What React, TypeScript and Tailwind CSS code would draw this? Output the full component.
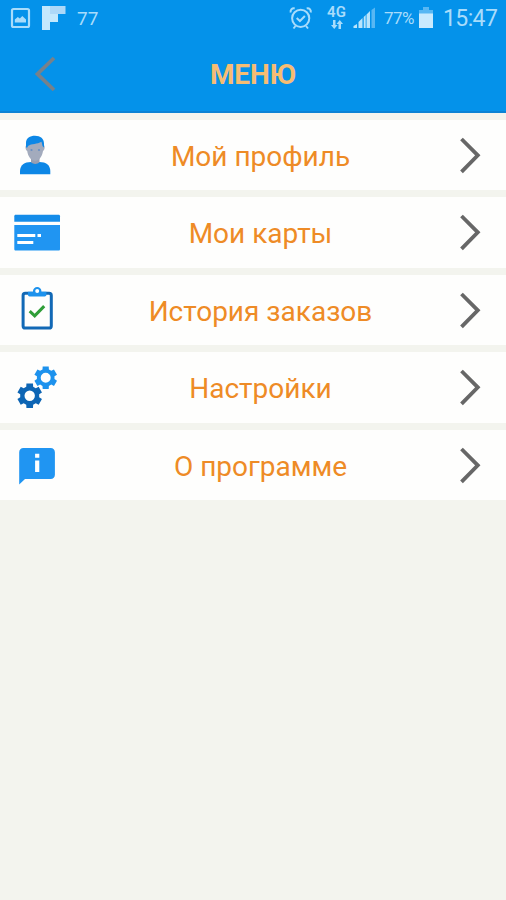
import type { ReactNode } from 'react';

/** Outline of a six-toothed gear wheel with a round hole. */
function gearPath(cx: number, cy: number, r: number, body: number, hole: number): string {
  const pts: string[] = [];
  for (let i = 0; i < 6; i++) {
    const mid = (i * 60 - 90) * (Math.PI / 180);
    const add = (radius: number, deg: number) => {
      const a = mid + (deg * Math.PI) / 180;
      pts.push(`${(cx + radius * Math.cos(a)).toFixed(2)} ${(cy + radius * Math.sin(a)).toFixed(2)}`);
    };
    add(body, -21);
    add(r, -15);
    add(r, 15);
    add(body, 21);
  }
  return `M${pts.join('L')}Z M${cx - hole} ${cy}a${hole} ${hole} 0 1 0 ${hole * 2} 0a${hole} ${hole} 0 1 0 ${-hole * 2} 0Z`;
}

function RowIcon({ children }: { children: ReactNode }) {
  return (
    <svg className="h-[70.5px] w-20 shrink-0" viewBox="0 0 80 70.5" fill="none">
      {children}
    </svg>
  );
}

const profileIcon = (
  <RowIcon>
    <path d="M20 54.3v-3.2c0-6.2 4.5-9.2 11-9.2h8.5c6.500 0 10.800 3 10.800 9.200v3.200Z" fill="#0d87e6" />
    <path d="M31 38h8.500v4.200c-2.500 2.300-6 2.300-8.500 0Z" fill="#989eb1" />
    <path d="M26.700 25c-1.800.2-1.500 5 .5 6 .8 5.600 4 9.800 7.900 9.800s7.100-4.200 7.900-9.800c2-1 2.300-5.800.5-6l-2-5H28.500Z" fill="#a3abbd" />
    <path d="M26 27.500v-4.500c0-5 4-7.200 9-7.200 5.500 0 9 3 9 7.700v4l-1.500-1.500-1-4.200c-4.400 2.700-9.800 1.600-13.500 4.300l-.6 1.500Z" fill="#0d87e6" />
    <circle cx="31.500" cy="30" r="1.100" fill="#6a8fc0" />
    <circle cx="39" cy="30" r="1.100" fill="#6a8fc0" />
  </RowIcon>
);

const cardsIcon = (
  <RowIcon>
    <path d="M14.300 19.200c0-1 .5-1.500 1.500-1.500h42.700c1 0 1.500.5 1.500 1.500v5.500H14.300Z" fill="#148ce9" />
    <path d="M14.300 28H60v24c0 1-.5 1.500-1.500 1.500H15.800c-1 0-1.500-.5-1.500-1.500Z" fill="#2095f2" />
    <path d="M17.300 38.500h18M37.500 38.500h3.500M17.300 45.500h16" stroke="#fff" strokeWidth="3.200" />
  </RowIcon>
);

const historyIcon = (
  <RowIcon>
    <rect x="23.100" y="18.300" width="28.200" height="34.800" rx="2.200" stroke="#1269b6" strokeWidth="3" />
    <path d="M28 16.800h5v-.7a4.200 4.200 0 0 1 8.400 0v.7h5v3c0 1-.7 1.700-1.700 1.700h-15c-1 0-1.700-.7-1.700-1.700Z" fill="#1d92ed" />
    <circle cx="37.200" cy="15.900" r="2" fill="#fff" />
    <path d="m29.700 36.200 5 4.700 9.500-9.800" stroke="#2f9e38" strokeWidth="3" />
  </RowIcon>
);

const settingsIcon = (
  <RowIcon>
    <path d={gearPath(45.700, 25.700, 11.700, 8.900, 5)} fill="#1d92ed" fillRule="evenodd" />
    <path d={gearPath(29.700, 43.700, 12.700, 9.600, 5.200)} fill="#0d65b4" fillRule="evenodd" />
  </RowIcon>
);

const aboutIcon = (
  <RowIcon>
    <path d="M19.200 54.500V22.200c0-2.500 1.700-4.200 4.200-4.200h27.300c2.500 0 4.200 1.700 4.200 4.200v22.600c0 2.500-1.700 4.200-4.200 4.200H25Z" fill="#2095f2" />
    <path d="M37.200 23.700v4.100M37.200 30.400v11.700" stroke="#fff" strokeWidth="4.200" />
  </RowIcon>
);

const items = [
  { label: 'Мой профиль', icon: profileIcon },
  { label: 'Мои карты', icon: cardsIcon },
  { label: 'История заказов', icon: historyIcon },
  { label: 'Настройки', icon: settingsIcon },
  { label: 'О программе', icon: aboutIcon },
];

function StatusBar() {
  return (
    <div className="flex h-[37px] items-center text-[#a8dcfb]">
      <svg className="h-[37px] w-[72px] shrink-0" viewBox="0 0 72 37" fill="none">
        <rect x="12" y="9" width="17" height="18" rx="1.500" stroke="#a8dcfb" strokeWidth="2.200" />
        <path d="M14.800 22.500v-3l3-2.500 2 1.500 2.500-2.500 3.700 3.500v3Z" fill="#a8dcfb" />
        <path d="M42 6h8v24h-8Z" fill="#c3e8fd" />
        <path d="M50 6h15.500v8H50Z" fill="#add8f8" />
        <path d="M50 14h8v8h-8Z" fill="#c3e8fd" />
      </svg>
      <span className="w-[217px] shrink-0 pl-[5px] text-[19px] leading-none">77</span>
      <svg className="h-[37px] w-[34px] shrink-0" viewBox="289 0 34 37" fill="none" stroke="#a8dcfb" strokeWidth="2">
        <circle cx="300.700" cy="18.300" r="8.600" />
        <path d="m296.700 18 3.200 3 5-5M290.700 12.500c-.7-2.500 1.500-4.700 4-4M310.700 12.500c.7-2.500-1.500-4.700-4-4M295.500 26l-2 2.500M306 26l2 2.500" />
      </svg>
      <div className="flex h-[37px] w-[27px] shrink-0 flex-col items-center pt-[5px]">
        <span className="text-[15px] leading-[15px] font-semibold">4G</span>
        <svg className="h-[11px] w-[14px]" viewBox="0 0 14 11" fill="#a8dcfb">
          <path d="M3 0h2.500v5H7.500L4.250 9 1 5h2ZM8.500 9V4h-2l3.250-4L13 4h-2v5Z" />
        </svg>
      </div>
      <svg className="h-[37px] w-[34px] shrink-0" viewBox="350 0 34 37" fill="#b9e4fc">
        <path d="M353.500 28v-2l3.500-2V28ZM358.500 28v-6l4-4V28ZM363.700 28V17l2-2V28ZM366.500 28V14.500l3.500-3.500v17Z" />
        <path d="M371.500 28V10l3.500-2.500v20.500Z" fill="#58b7f3" />
      </svg>
      <span className="w-[34px] shrink-0 text-[17px] leading-none tracking-[-0.5px]">77%</span>
      <svg className="h-[37px] w-[22px] shrink-0" viewBox="418 0 22 37">
        <path d="M423 7h6v3h4v4h-14v-4h4Z" fill="#58b7f3" />
        <path d="M419 13.500h14V28h-14Z" fill="#c9eafe" />
      </svg>
      <span className="pl-[3px] text-[23px] leading-none tracking-[-0.6px]">15:47</span>
    </div>
  );
}

export default function App() {
  return (
    <div className="h-[900px] w-[506px] overflow-hidden bg-[#f3f4ee] font-['Roboto','Noto_Sans',sans-serif]">
      <header className="h-[112.500px] border-b-2 border-[#0b82d4] bg-[#0492ea]">
        <StatusBar />
        <div className="grid grid-cols-[80px_1fr_80px] items-center">
          <svg className="h-[75px] w-20" viewBox="0 37 80 75" fill="none">
            <path d="M54 58 37.500 74 54 90" stroke="#77818a" strokeWidth="3.800" />
          </svg>
          <h1 className="pt-px text-center text-[28px] leading-[74px] font-bold tracking-[-0.1px] text-[#f6bd73]">МЕНЮ</h1>
        </div>
      </header>
      <nav className="flex flex-col gap-[7px] pt-[7px]">
        {items.map(({ label, icon }) => (
          <button key={label} className="flex h-[70.500px] w-full items-center bg-[#fefefd]">
            {icon}
            <span className="flex-1 pt-[4px] pl-[7px] text-center text-[28px] leading-none whitespace-nowrap text-[#ee8b26]">
              {label}
            </span>
            <svg className="h-[70.500px] w-[72px] shrink-0" viewBox="434 0 72 70.500" fill="none">
              <path d="m461.500 19 16.300 16.300-16.300 16.500" stroke="#676767" strokeWidth="3.800" />
            </svg>
          </button>
        ))}
      </nav>
    </div>
  );
}
